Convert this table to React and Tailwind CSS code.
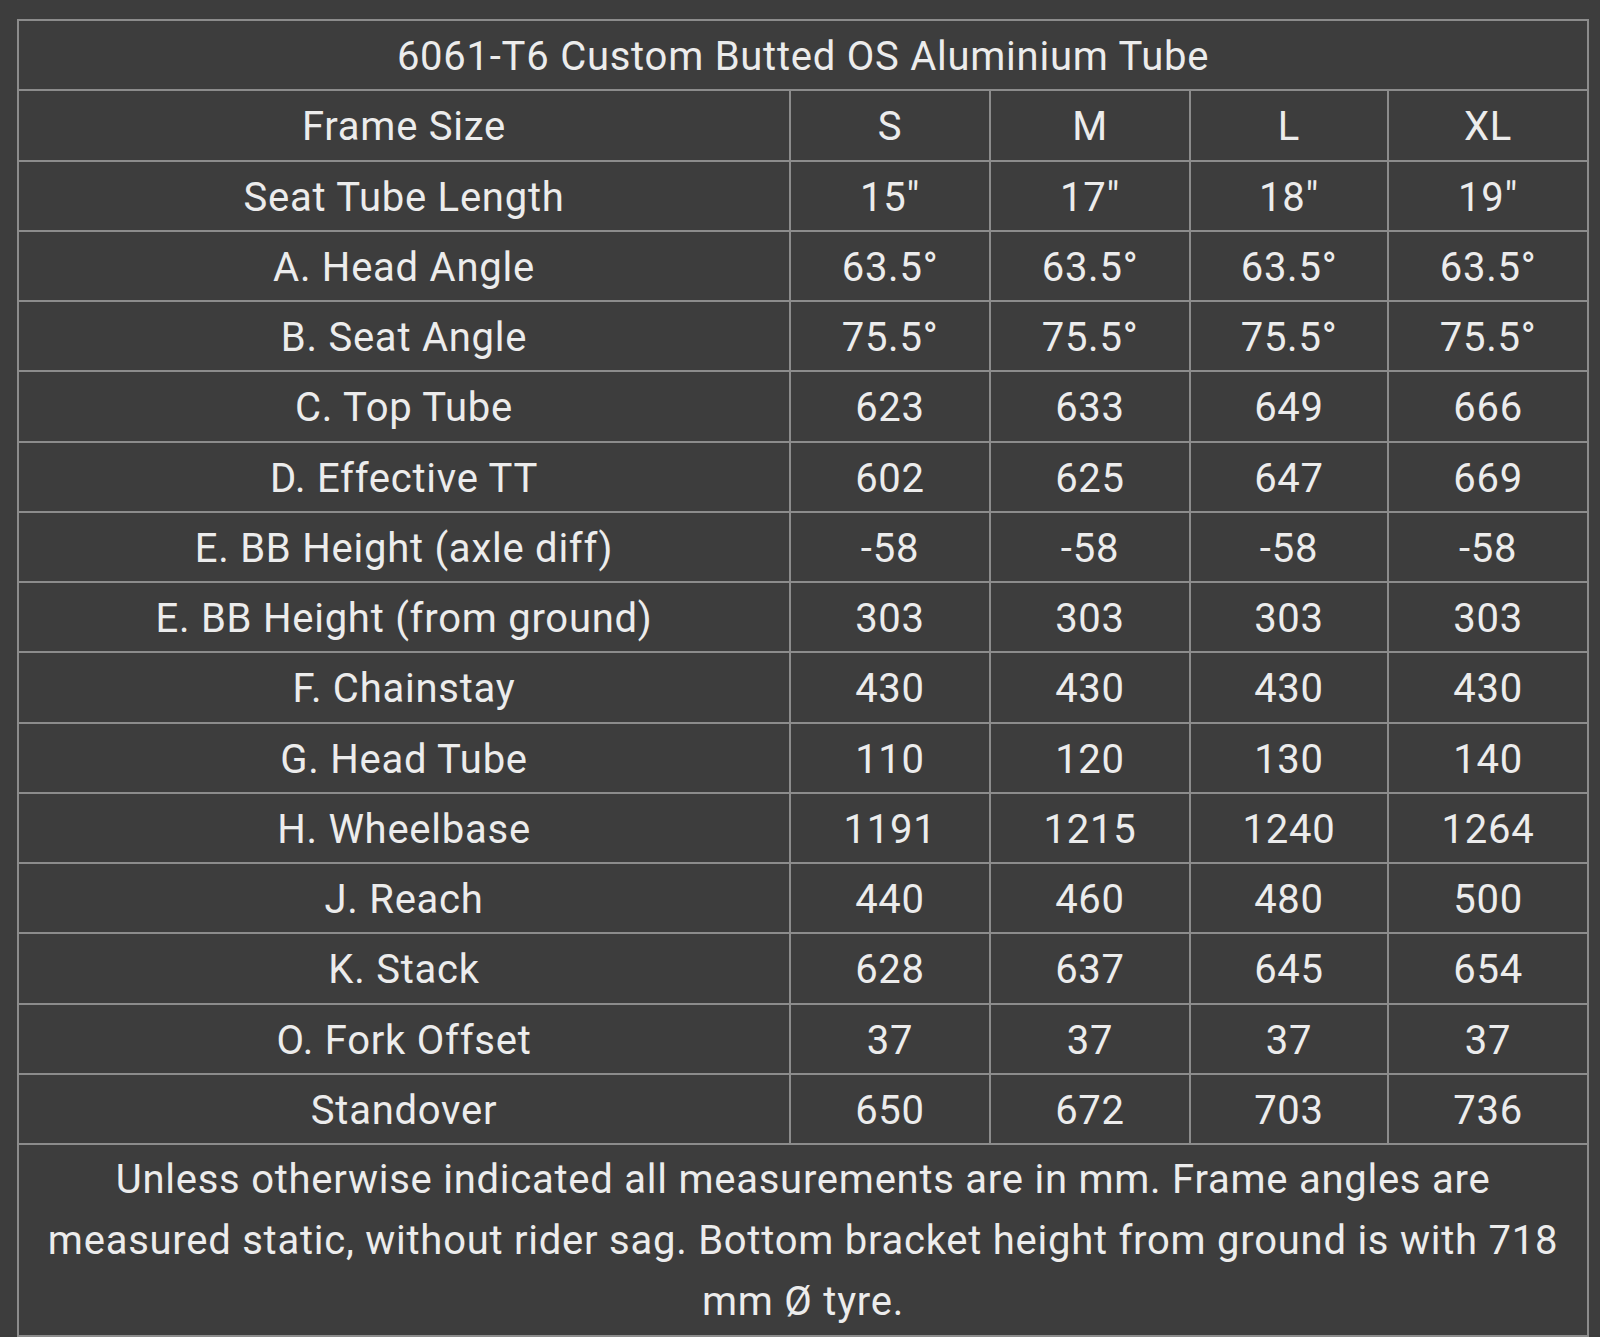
const sizes = ['S', 'M', 'L', 'XL']

const rows = [
  ['Seat Tube Length', '15"', '17"', '18"', '19"'],
  ['A. Head Angle', '63.5°', '63.5°', '63.5°', '63.5°'],
  ['B. Seat Angle', '75.5°', '75.5°', '75.5°', '75.5°'],
  ['C. Top Tube', '623', '633', '649', '666'],
  ['D. Effective TT', '602', '625', '647', '669'],
  ['E. BB Height (axle diff)', '-58', '-58', '-58', '-58'],
  ['E. BB Height (from ground)', '303', '303', '303', '303'],
  ['F. Chainstay', '430', '430', '430', '430'],
  ['G. Head Tube', '110', '120', '130', '140'],
  ['H. Wheelbase', '1191', '1215', '1240', '1264'],
  ['J. Reach', '440', '460', '480', '500'],
  ['K. Stack', '628', '637', '645', '654'],
  ['O. Fork Offset', '37', '37', '37', '37'],
  ['Standover', '650', '672', '703', '736'],
]

const cell = 'border-2 border-[#8c8c8c] h-[70.25px] pt-[4px] pb-0 px-0 text-center align-middle'

export default function App() {
  return (
    <div
      className="min-h-[1337px] bg-[#3d3d3d] pt-[19px] pl-[17px] pr-[11px] text-[#ececec] text-[40px] leading-[60px] tracking-[0.75px]"
      style={{ fontFamily: 'Roboto, "Liberation Sans", sans-serif' }}
    >
      <table className="w-[1572px] border-collapse table-fixed">
        <colgroup>
          <col className="w-[772px]" />
          <col className="w-[200px]" />
          <col className="w-[200px]" />
          <col className="w-[198px]" />
          <col className="w-[200px]" />
        </colgroup>
        <tbody>
          <tr>
            <td colSpan={5} className={cell}>6061-T6 Custom Butted OS Aluminium Tube</td>
          </tr>
          <tr>
            <td className={cell}>Frame Size</td>
            {sizes.map((s) => (
              <td key={s} className={cell}>{s}</td>
            ))}
          </tr>
          {rows.map((r) => (
            <tr key={r[0]}>
              {r.map((v, i) => (
                <td key={i} className={cell}>{v}</td>
              ))}
            </tr>
          ))}
          <tr>
            <td colSpan={5} className="border-2 border-[#8c8c8c] px-[24px] pt-[4px] pb-[3px] text-center leading-[61px]">
              Unless otherwise indicated all measurements are in mm. Frame angles are measured static, without rider sag.
              Bottom bracket height from ground is with 718 mm Ø tyre.
            </td>
          </tr>
        </tbody>
      </table>
    </div>
  )
}
